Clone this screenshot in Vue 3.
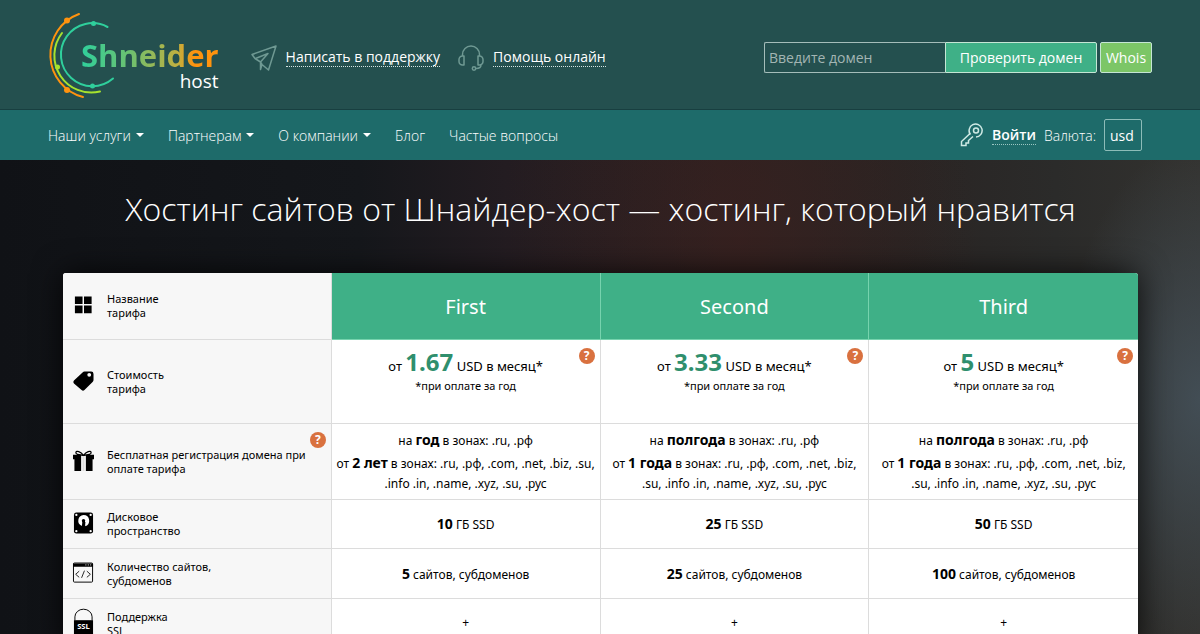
<script setup>
import { ref } from 'vue'

const domain = ref('')
const currency = ref('usd')

const menu = [
  { label: 'Наши услуги', drop: true },
  { label: 'Партнерам', drop: true },
  { label: 'О компании', drop: true },
  { label: 'Блог', drop: false },
  { label: 'Частые вопросы', drop: false }
]

const plans = [
  {
    name: 'First', price: '1.67', period: 'год', long: '2 лет',
    zones: '.ru, .рф, .com, .net, .biz, .su, .info .in, .name, .xyz, .su, .рус',
    disk: '10', sites: '5'
  },
  {
    name: 'Second', price: '3.33', period: 'полгода', long: '1 года',
    zones: '.ru, .рф, .com, .net, .biz, .su, .info .in, .name, .xyz, .su, .рус',
    disk: '25', sites: '25'
  },
  {
    name: 'Third', price: '5', period: 'полгода', long: '1 года',
    zones: '.ru, .рф, .com, .net, .biz, .su, .info .in, .name, .xyz, .su, .рус',
    disk: '50', sites: '100'
  }
]
</script>

<template>
  <div class="page">
    <header class="top">
      <a class="logo" href="#" aria-label="Shneider host">
        <svg class="arcs" viewBox="0 0 70 90" fill="none" stroke-width="2" stroke-linecap="round" aria-hidden="true">
          <path d="M31 4A43.500 43.500 0 0 0 35 87" stroke="#ff930e" />
          <path d="M14 23A37 37 0 0 0 52 81.500" stroke="#a6e22e" />
          <path d="M59.500 17A31.500 31.500 0 1 0 65 68.500" stroke="#2fcf9c" />
          <circle cx="19" cy="10.500" r="3" fill="#ff930e" />
          <circle cx="19" cy="80" r="3" fill="#ff930e" />
          <circle cx="9.500" cy="57" r="2.500" fill="#a6e22e" />
          <circle cx="45.500" cy="13.500" r="2.500" fill="#2fcf9c" />
          <circle cx="44.500" cy="76" r="2.500" fill="#2fcf9c" />
        </svg>
        <span class="wordmark">
          <span class="brand">Shneider</span>
          <span class="sub">host</span>
        </span>
      </a>

      <div class="contacts">
        <a class="contact" href="#">
          <svg class="plane" viewBox="0 0 26 26" aria-hidden="true">
            <path d="M1 9.500 25 1 17.500 25 11 19.500 9.500 24.500V17L4 13.500ZM4.500 13.500 17 8.500 9.500 17M11 19.500 9.500 17" />
          </svg>
          <span>Написать в поддержку</span>
        </a>
        <a class="contact" href="#">
          <svg class="headset" viewBox="0 0 26 26" aria-hidden="true">
            <path d="M4.500 11V9.500a8.500 8.500 0 0 1 17 0V11M6 11v9H4.500A3.500 3.500 0 0 1 1 16.500v-2A3.500 3.500 0 0 1 4.500 11ZM20 11v9h1.500a3.500 3.500 0 0 0 3.500-3.500v-2a3.500 3.500 0 0 0-3.500-3.500ZM18 23.500c3 0 5-.5 5-3.500" />
            <circle cx="16" cy="23.500" r="1.700" />
          </svg>
          <span>Помощь онлайн</span>
        </a>
      </div>

      <form class="search" @submit.prevent>
        <input v-model="domain" type="text" placeholder="Введите домен" aria-label="Введите домен" />
        <button class="check" type="submit">Проверить домен</button>
        <button class="whois" type="button">Whois</button>
      </form>
    </header>

    <nav class="nav">
      <ul class="menu">
        <li v-for="item in menu" :key="item.label">
          <a href="#">{{ item.label }}<i v-if="item.drop" class="caret"></i></a>
        </li>
      </ul>
      <div class="account">
        <svg class="key" viewBox="0 0 24 24" aria-hidden="true">
          <path d="M10.500 11.500A6.500 6.500 0 1 1 16 14M9 7.500 9.500 11 1.500 18.500V22.500H6V20H8.500V17.500L13 13.500" />
          <circle cx="16" cy="7.500" r="2.500" />
        </svg>
        <a class="login" href="#">Войти</a>
        <label for="currency">Валюта:</label>
        <select id="currency" v-model="currency">
          <option value="usd">usd</option>
          <option value="rub">rub</option>
        </select>
      </div>
    </nav>

    <main class="hero">
      <h1>Хостинг сайтов от Шнайдер-хост — хостинг, который нравится</h1>

      <table class="plans">
        <thead>
          <tr class="names">
            <th scope="row">
              <div class="feature">
                <svg viewBox="0 0 22 22" aria-hidden="true"><path d="M2 1h8v8H2zM11.500 1h8v8h-8zM2 10.500h8v8H2zM11.500 10.500h8v8h-8z" /></svg>
                <span>Название<br />тарифа</span>
              </div>
            </th>
            <th v-for="p in plans" :key="p.name" scope="col">{{ p.name }}</th>
          </tr>
        </thead>
        <tbody>
          <tr class="cost">
            <th scope="row">
              <div class="feature">
                <svg viewBox="0 0 22 22" aria-hidden="true"><path fill-rule="evenodd" d="M12 0h7q2.500 0 2.500 2.500V9q0 1-1 2l-8.500 8.500q-1.500 1.300-3 0L1 12.500q-1.500-1.500 0-3L10 1q1-1 2-1Zm5 1.500a2 2 0 1 0 0 4 2 2 0 0 0 0-4Z" /></svg>
                <span>Стоимость<br />тарифа</span>
              </div>
            </th>
            <td v-for="p in plans" :key="p.name">
              <p class="price">от <b>{{ p.price }}</b> USD в месяц*</p>
              <p class="note">*при оплате за год</p>
              <button class="hint" type="button" aria-label="Подробнее о стоимости">?</button>
            </td>
          </tr>
          <tr class="domains">
            <th scope="row">
              <div class="feature">
                <svg viewBox="0 2 22 22" aria-hidden="true">
                  <path d="M0 5.500h22v4.500H0zM1.500 10h19V22.500h-19z" />
                  <path d="M8.500 5.500h5V22.500h-5z" fill="#f7f7f7" />
                  <path d="M10 5.500h2V22.500h-2z" fill="#ddd" />
                  <path d="M11 6C8 2 3.500.5 3 3S8 5.500 11 6C14 2 18.500.5 19 3S14 5.500 11 6Z" fill="none" stroke="#000" stroke-width="1.300" />
                </svg>
                <span>Бесплатная регистрация домена при оплате тарифа</span>
              </div>
              <button class="hint" type="button" aria-label="Подробнее о регистрации домена">?</button>
            </th>
            <td v-for="p in plans" :key="p.name">
              <p class="short">на <b>{{ p.period }}</b> в зонах: .ru, .рф</p>
              <p>от <b>{{ p.long }}</b> в зонах: {{ p.zones }}</p>
            </td>
          </tr>
          <tr class="disk">
            <th scope="row">
              <div class="feature">
                <svg viewBox="0 2 22 22" aria-hidden="true">
                  <rect x="1" y="1" width="20" height="22" rx="2.500" />
                  <g fill="#fff">
                    <circle cx="3.500" cy="3.500" r="1.200" /><circle cx="18.500" cy="3.500" r="1.200" />
                    <circle cx="3.500" cy="20.500" r="1.200" /><circle cx="18.500" cy="20.500" r="1.200" />
                    <path d="M11 3.500a6 6 0 0 1 1.500 11.800L13 11h-3l-.8 4A6 6 0 0 1 11 3.500Z" />
                  </g>
                  <circle cx="11" cy="9.500" r="1.800" />
                  <path d="M10 9.500h2.500l.3 6h-2.500z" />
                </svg>
                <span>Дисковое<br />пространство</span>
              </div>
            </th>
            <td v-for="p in plans" :key="p.name"><b>{{ p.disk }}</b> ГБ SSD</td>
          </tr>
          <tr class="sites">
            <th scope="row">
              <div class="feature">
                <svg viewBox="0 3 22 22" aria-hidden="true">
                  <rect x=".5" y="2.500" width="20" height="20" rx="1" fill="none" stroke="#000" />
                  <path d="M0 3h21v3.500H0z" />
                  <path d="M13 4.500h1M15.500 4.500h1M18 4.500h1" stroke="#fff" />
                  <path d="M6.500 11 2.800 14.300 6.500 17.500M14.500 11l3.700 3.300-3.700 3.200M12 10.500 9 18" fill="none" stroke="#222" />
                </svg>
                <span>Количество сайтов,<br />субдоменов</span>
              </div>
            </th>
            <td v-for="p in plans" :key="p.name"><b>{{ p.sites }}</b> сайтов, субдоменов</td>
          </tr>
          <tr class="ssl">
            <th scope="row">
              <div class="feature">
                <svg viewBox="0 1 22 32" class="lock" aria-hidden="true">
                  <path d="M2 13V9.500a9 8 0 0 1 18 0V13" fill="none" stroke="#000" />
                  <rect x="1" y="13" width="20" height="16" />
                  <text x="11" y="22" text-anchor="middle">SSL</text>
                </svg>
                <span>Поддержка<br />SSL</span>
              </div>
            </th>
            <td v-for="p in plans" :key="p.name">+</td>
          </tr>
        </tbody>
      </table>
    </main>
  </div>
</template>

<style>
body {
  margin: 0;
  background: #141519;
}
</style>

<style scoped>
.page {
  font-family: "Open Sans", "Noto Sans", sans-serif;
  font-size: 14px;
  color: #fff;
}
a {
  color: inherit;
  text-decoration: none;
}
p {
  margin: 0;
}
button,
input,
select {
  font: inherit;
  color: inherit;
  box-sizing: border-box;
  margin: 0;
}

.top {
  display: flex;
  align-items: center;
  box-sizing: border-box;
  min-height: 110px;
  padding: 0 48px;
  background: #24504f;
  border-bottom: 1px solid #183f40;
}
.logo {
  display: flex;
  align-items: center;
}
.arcs {
  width: 70px;
  height: 90px;
}
.wordmark {
  display: flex;
  flex-direction: column;
  align-items: flex-end;
  margin-left: -37px;
  padding-top: 20px;
}
.brand {
  font-size: 31px;
  line-height: 32px;
  font-weight: 700;
  background: linear-gradient(90deg, #2fd09c, #6cc070 35%, #c0b040 70%, #ff930e 82%);
  background-clip: text;
  color: transparent;
}
.sub {
  font-size: 19px;
  line-height: 20px;
}
.contacts {
  display: flex;
  gap: 18px;
  margin-left: 32px;
  padding-top: 6px;
}
.contact {
  display: flex;
  align-items: center;
  gap: 9px;
  line-height: 18px;
}
.contact span {
  border-bottom: 1px dotted #d5e5e3;
}
.contact svg {
  width: 26px;
  height: 26px;
  fill: none;
  stroke: #6f9993;
  stroke-width: 1.5;
  stroke-linejoin: round;
}
.search {
  display: flex;
  margin-left: auto;
  padding-top: 6px;
}
.search input {
  width: 181px;
  height: 31px;
  padding: 0 4px;
  border: 1px solid #a5bdba;
  border-right: 0;
  border-radius: 2px 0 0 2px;
  background: transparent;
}
.search input::placeholder {
  color: #a3b5b3;
  opacity: 1;
}
.search button {
  height: 31px;
  border: 1px solid #c5e6d5;
}
.check {
  width: 152px;
  padding: 0;
  background: #3fb087;
  border-radius: 0 2px 2px 0;
}
.whois {
  width: 52px;
  margin-left: 3px;
  padding: 0;
  background: #7cc667;
  border-radius: 2px;
}

.nav {
  display: flex;
  align-items: center;
  justify-content: space-between;
  min-height: 50px;
  padding: 0 58px 0 48px;
  background: #1e6b6a;
  font-weight: 300;
}
.menu {
  display: flex;
  gap: 24px;
  margin: 0;
  padding: 0;
  list-style: none;
}
.menu a {
  display: flex;
  align-items: center;
  gap: 5px;
}
.caret {
  border: 4px solid transparent;
  border-top-color: #fff;
  border-bottom: 0;
}
.account {
  display: flex;
  align-items: center;
  gap: 8px;
}
.key {
  width: 24px;
  height: 24px;
  fill: none;
  stroke: #cfeae5;
  stroke-width: 1.5;
}
.login {
  font-weight: 600;
  line-height: 18px;
  border-bottom: 1px dotted #9cc6c2;
}
.account select {
  appearance: none;
  width: 38px;
  height: 32px;
  padding: 0 5px;
  border: 1px solid #8dbcb8;
  border-radius: 2px;
  background: transparent;
  font-weight: 400;
}

.hero {
  padding: 0 62px 40px 63px;
  background:
    radial-gradient(ellipse 140px 260px at 1200px 240px, #46545ecc, transparent),
    radial-gradient(ellipse 240px 320px at 740px 80px, #3f211f88, transparent),
    linear-gradient(90deg, #101216 0, #15171b 30%, #231c21 42%, #2b2020 60%, #292423 75%, #2b2b2a 88%, #33322f 100%);
}
h1 {
  margin: 0;
  padding: 25px 0 41px;
  font-size: 32px;
  line-height: 47px;
  font-weight: 300;
  text-align: center;
}
.plans {
  width: 100%;
  table-layout: fixed;
  border-collapse: separate;
  border-spacing: 0;
  border-radius: 3px;
  overflow: hidden;
  background: #fff;
  color: #000;
  box-shadow: 0 0 30px #000c;
  font-family: "Noto Sans", "Open Sans", sans-serif;
  font-size: 12px;
  line-height: 20px;
}
.plans th,
.plans td {
  position: relative;
  box-sizing: border-box;
  padding: 2px 3px 0;
  border-right: 1px solid #dcdcdc;
  border-bottom: 1px solid #dcdcdc;
  text-align: center;
  font-weight: 400;
}
.plans tr > :last-child {
  border-right: 0;
}
.plans th[scope="row"] {
  padding: 0 10px;
  background: #f7f7f7;
  text-align: left;
}
.plans th[scope="col"] {
  background: #3fb087;
  border-color: #77d3ae;
  color: #fff;
  font-size: 20px;
}
.plans td b {
  font-size: 14px;
  line-height: 14px;
}
.feature {
  display: flex;
  align-items: center;
  gap: 13px;
  font-size: 11px;
  line-height: 14px;
}
.feature svg {
  flex: none;
  width: 21px;
  height: 22px;
  overflow: visible;
}
.feature .lock {
  height: 32px;
}
.lock text {
  fill: #fff;
  font-size: 8px;
  font-weight: 700;
}
.names > * {
  height: 67px;
}
.cost > * {
  height: 84px;
}
.domains > * {
  height: 76px;
}
.disk > * {
  height: 49px;
}
.sites > * {
  height: 50px;
}
.ssl > * {
  height: 50px;
}
.plans .cost td {
  padding-top: 10px;
  vertical-align: top;
}
.plans .ssl td {
  padding: 0 3px 2px;
}
.price {
  font-size: 13px;
  line-height: 26px;
}
.plans .price b {
  color: #2f8f6d;
  font-size: 24px;
  line-height: 24px;
}
.note {
  font-size: 11px;
  line-height: 14px;
}
.short {
  padding-bottom: 3px;
}
.hint {
  position: absolute;
  top: 8px;
  right: 5px;
  width: 16px;
  height: 16px;
  padding: 0;
  border: 0;
  border-radius: 50%;
  background: #d9713f;
  color: #fff;
  font-size: 12px;
  line-height: 16px;
  font-weight: 700;
}
</style>
